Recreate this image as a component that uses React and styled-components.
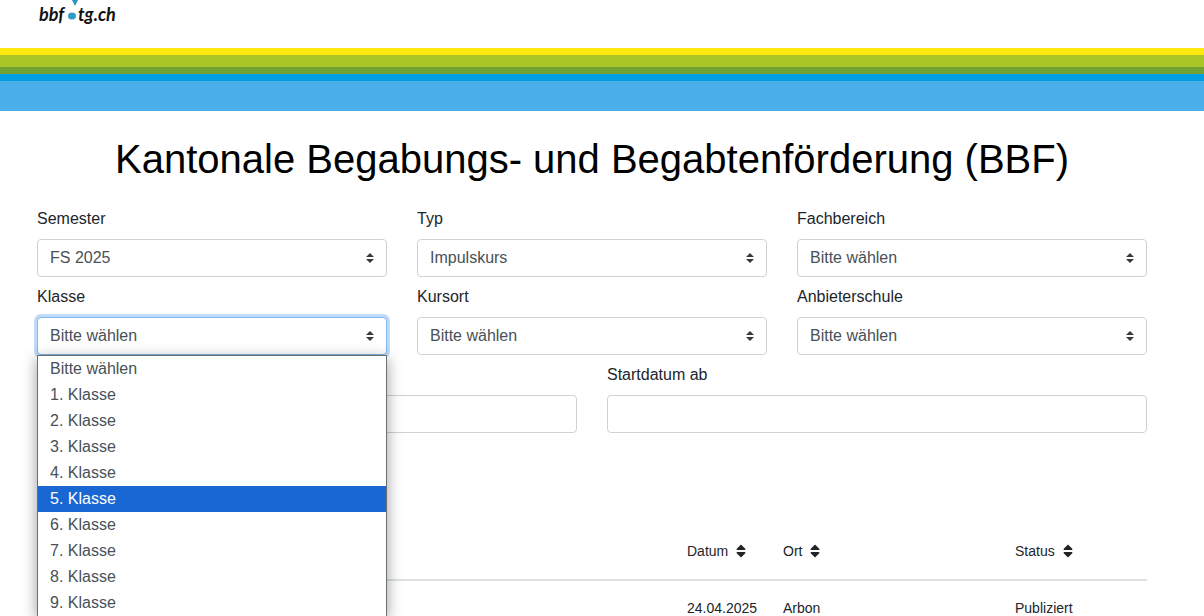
import React from "react";
import styled, { createGlobalStyle, css } from "styled-components";

const GlobalStyle = createGlobalStyle`
  *, *::before, *::after { box-sizing: border-box; }
  body {
    margin: 0;
    background: #fff;
    color: #212529;
    font-family: "Liberation Sans", Arial, sans-serif;
    font-size: 16px;
    line-height: 24px;
  }
`;

const Page = styled.div`
  height: 100vh;
  overflow: hidden;
`;

const Header = styled.header`
  height: 48px;
  padding-left: 37px;
`;

const HomeLink = styled.a`
  display: inline-block;
  color: #111;
  text-decoration: none;
`;

const LogoSvg = styled.svg`
  display: block;
  font-family: Lato, "Liberation Sans", sans-serif;
  font-size: 18px;
  font-style: italic;
  font-weight: 700;
`;

const Stripe = styled.div`
  height: ${(p) => p.$height}px;
  background: ${(p) => p.$color};
`;

const Main = styled.main`
  padding: 24px 57px 0 37px;
`;

const Title = styled.h1`
  margin: 0 0 24px;
  color: #000;
  font-size: 40px;
  font-weight: 400;
  line-height: 48px;
  text-align: center;
`;

const Filters = styled.form`
  display: flex;
  flex-direction: column;
  gap: 8px;
`;

const FilterRow = styled.div`
  display: grid;
  grid-template-columns: repeat(${(p) => p.$columns}, minmax(0, 1fr));
  column-gap: 30px;
  align-items: end;
`;

const Field = styled.div`
  display: flex;
  flex-direction: column;
  gap: 8px;
`;

const ControlWrap = styled.div`
  position: relative;
`;

const control = css`
  display: block;
  width: 100%;
  height: 38px;
  margin: 0;
  padding: 0 12px;
  border: 1px solid #ced2d4;
  border-radius: 4px;
  background: #fff;
  color: #495057;
  font: inherit;
  outline: none;
`;

const Select = styled.select`
  ${control}
  appearance: none;
  ${(p) =>
    p.$open &&
    css`
      border-color: #80b5ee;
      box-shadow: 0 0 0 3px #bfdbf7;
    `}
`;

const Input = styled.input`
  ${control}
`;

const Caret = styled.svg`
  position: absolute;
  top: 14px;
  right: 13px;
  fill: #343a40;
  pointer-events: none;
`;

const Menu = styled.ul`
  position: absolute;
  z-index: 2;
  top: 100%;
  left: 0;
  right: 0;
  margin: 0;
  padding: 0;
  border: 1px solid #6b7075;
  border-bottom: 0;
  background: #fff;
  box-shadow: 0 4px 14px rgba(0, 0, 0, 0.4);
  list-style: none;
`;

const MenuItem = styled.li`
  height: 26px;
  padding: 0 12px;
  background: ${(p) => (p.$active ? "#1967d2" : "transparent")};
  color: ${(p) => (p.$active ? "#fff" : "#495057")};
  line-height: 26px;
`;

const Results = styled.table`
  width: 100%;
  margin-top: 88px;
  border-collapse: collapse;
  table-layout: fixed;
  font-size: 14px;
  line-height: 20px;
`;

const HeadCell = styled.th`
  width: ${(p) => p.$width || "auto"};
  padding: 20px 12px 18px;
  border-bottom: 2px solid #dee2e4;
  font-weight: 400;
  text-align: left;
`;

const Cell = styled.td`
  padding: 17px 12px;
`;

const SortButton = styled.button`
  display: flex;
  align-items: center;
  gap: 8px;
  padding: 0;
  border: 0;
  background: none;
  color: inherit;
  font: inherit;
`;

function Logo() {
  return (
    <LogoSvg width="84" height="30" viewBox="0 0 84 30">
      <path d="M35 0H41L39 4Q38 7 37 4Z" fill="#2a94c4" />
      <text x="2" y="21" fill="currentColor">bbf</text>
      <ellipse cx="35" cy="16" rx="4" ry="3.5" fill="#2e9bcb" />
      <text x="41" y="21" fill="currentColor">tg.ch</text>
    </LogoSvg>
  );
}

function SelectField({ id, label, value = "Bitte wählen", options }) {
  return (
    <Field>
      <label htmlFor={id}>{label}</label>
      <ControlWrap>
        <Select id={id} defaultValue={value} $open={!!options}>
          {(options || [value]).map((o) => (
            <option key={o}>{o}</option>
          ))}
        </Select>
        <Caret width="8" height="10" viewBox="0 0 4 5" aria-hidden="true">
          <path d="M2 0L0 2h4zm0 5L0 3h4z" />
        </Caret>
        {options && (
          <Menu role="listbox" aria-label={label}>
            {options.map((o) => (
              <MenuItem
                key={o}
                role="option"
                aria-selected={o === "5. Klasse"}
                $active={o === "5. Klasse"}
              >
                {o}
              </MenuItem>
            ))}
          </Menu>
        )}
      </ControlWrap>
    </Field>
  );
}

function SortLabel({ children }) {
  return (
    <SortButton type="button">
      {children}
      <svg width="10" height="16" viewBox="0 0 320 512" fill="currentColor" aria-hidden="true">
        <path d="M41 288h238c21.4 0 32.1 25.9 17 41L177 448c-9.4 9.4-24.6 9.4-33.9 0L24 329c-15.1-15.1-4.4-41 17-41zm255-105L177 64c-9.4-9.4-24.6-9.4-33.9 0L24 183c-15.1 15.1-4.4 41 17 41h238c21.4 0 32.1-25.9 17-41z" />
      </svg>
    </SortButton>
  );
}

const stripes = [
  ["#ffe90f", 7],
  ["#a9c526", 12],
  ["#70a236", 7],
  ["#009fe3", 7],
  ["#4aafea", 30],
];

const classes = [
  "Bitte wählen",
  ...Array.from({ length: 9 }, (_, i) => `${i + 1}. Klasse`),
];

export default function App() {
  return (
    <Page>
      <GlobalStyle />
      <Header>
        <HomeLink href="#" aria-label="bbf.tg.ch">
          <Logo />
        </HomeLink>
      </Header>
      {stripes.map(([color, height]) => (
        <Stripe key={color} $color={color} $height={height} />
      ))}
      <Main>
        <Title>Kantonale Begabungs- und Begabtenförderung (BBF)</Title>
        <Filters>
          <FilterRow $columns={3}>
            <SelectField id="semester" label="Semester" value="FS 2025" />
            <SelectField id="typ" label="Typ" value="Impulskurs" />
            <SelectField id="fachbereich" label="Fachbereich" />
          </FilterRow>
          <FilterRow $columns={3}>
            <SelectField id="klasse" label="Klasse" options={classes} />
            <SelectField id="kursort" label="Kursort" />
            <SelectField id="schule" label="Anbieterschule" />
          </FilterRow>
          <FilterRow $columns={2}>
            <Input type="text" aria-label="Suche" />
            <Field>
              <label htmlFor="start">Startdatum ab</label>
              <Input id="start" type="text" />
            </Field>
          </FilterRow>
        </Filters>
        <Results>
          <thead>
            <tr>
              <HeadCell />
              <HeadCell $width="96px"><SortLabel>Datum</SortLabel></HeadCell>
              <HeadCell $width="232px"><SortLabel>Ort</SortLabel></HeadCell>
              <HeadCell $width="144px"><SortLabel>Status</SortLabel></HeadCell>
            </tr>
          </thead>
          <tbody>
            <tr>
              <Cell />
              <Cell>24.04.2025</Cell>
              <Cell>Arbon</Cell>
              <Cell>Publiziert</Cell>
            </tr>
          </tbody>
        </Results>
      </Main>
    </Page>
  );
}
